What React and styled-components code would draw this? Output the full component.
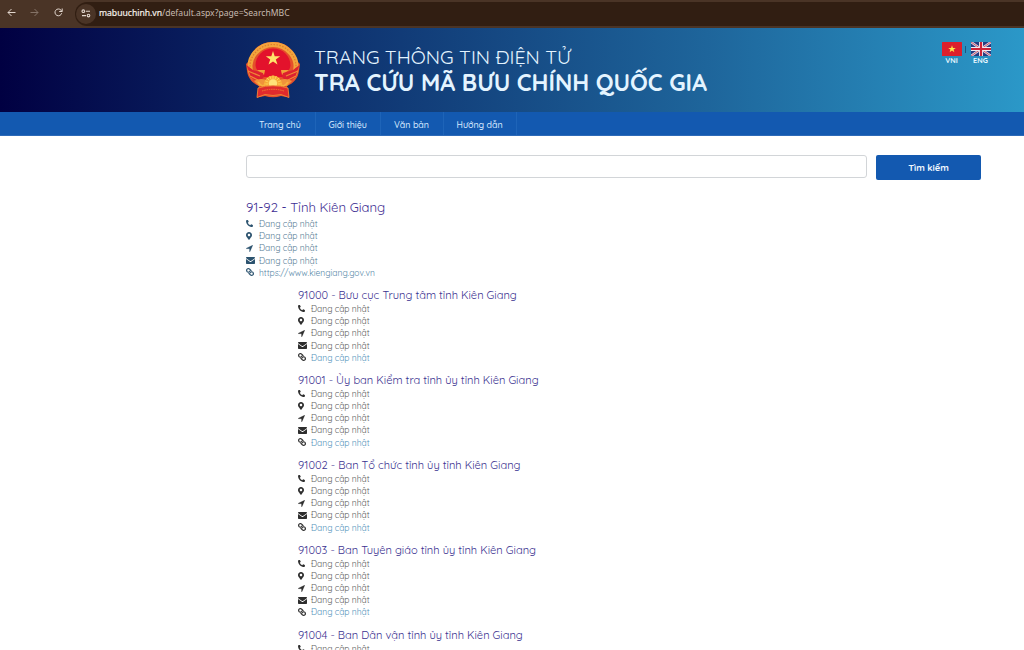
import React from 'react';
import styled, { createGlobalStyle } from 'styled-components';
import { FaPhoneAlt, FaMapMarkerAlt, FaLink } from 'react-icons/fa';

const GlobalStyle = createGlobalStyle`
  * { box-sizing: border-box; }
  html, body { margin: 0; height: 650px; overflow: hidden; background: #fff; }
  body { font-family: Quicksand, Inter, "Noto Sans", sans-serif; font-feature-settings: "cv11"; }
`;

const Page = styled.div`
  width: 1024px;
  height: 650px;
  overflow: hidden;
`;

const BrowserBar = styled.div`
  display: flex;
  align-items: center;
  height: 28px;
  padding: 0 0 3px 5px;
  background: #4a3426;
  color: #dccfc6;
`;

const ToolButton = styled.span`
  display: flex;
  justify-content: center;
  width: ${(p) => p.$w}px;
  color: ${(p) => (p.$dim ? '#857367' : '#e2d6cd')};
`;

const AddressBar = styled.div`
  display: flex;
  align-items: center;
  flex: 1;
  height: 24px;
  margin: 2px 0 0 10px;
  padding-left: 1px;
  border-radius: 12px 0 0 12px;
  background: #311e12;
`;

const SiteButton = styled.span`
  display: flex;
  align-items: center;
  justify-content: center;
  width: 20px;
  height: 20px;
  margin-right: 3px;
  border-radius: 50%;
  background: #4a3426;
`;

const Url = styled.span`
  font: 8.6px "Noto Sans", sans-serif;
  margin-top: -2px;
  white-space: pre;
  color: #c8bbb1;
  b { font-weight: 400; color: #f6efe9; -webkit-text-stroke: 0.2px #f6efe9; }
`;

const Header = styled.header`
  display: flex;
  align-items: flex-start;
  height: 84px;
  padding-left: 245px;
  background: linear-gradient(90deg, #010042 0%, #0d2e6c 30%, #1e659b 69%, #2b98c8 100%);
`;

const EmblemBox = styled.div`
  width: 56px;
  height: 60px;
  margin: 12px 13px 0 0;
`;

const Titles = styled.div`
  flex: 1;
  padding-top: 16px;
  color: #e4f4ff;
  white-space: nowrap;
`;

const TitleTop = styled.div`
  font-size: 19.6px;
  line-height: 26px;
  font-weight: 400;
`;

const TitleMain = styled.div`
  font-size: 23.5px;
  line-height: 24px;
  font-weight: 700;
`;

const Languages = styled.div`
  display: flex;
  padding: 14px 33px 0 0;
`;

const Language = styled.div`
  display: flex;
  flex-direction: column;
  align-items: center;
  width: 21px;
  color: #e9f8ff;
  font-size: 7.4px;
  font-weight: 700;
  line-height: 9px;
  svg { display: block; }
`;

const LanguageDivider = styled.i`
  width: 1px;
  height: 7px;
  margin: 4px 4px 0 3px;
  background: #1c5680;
`;

const Nav = styled.nav`
  display: flex;
  height: 24px;
  padding-left: 246px;
  background: #1359b0;
  border-bottom: 1px solid #2d6ab8;
`;

const NavItem = styled.a`
  width: ${(p) => p.$w}px;
  padding-left: 13px;
  border-right: 1px solid #1e64b8;
  color: #d9eaff;
  font-size: 8.9px;
  font-weight: 500;
  line-height: 25px;
  white-space: nowrap;
`;

const SearchRow = styled.form`
  display: flex;
  align-items: flex-start;
  gap: 9px;
  padding: 19px 0 0 246px;
`;

const SearchInput = styled.input`
  width: 621px;
  height: 23px;
  border: 1px solid #d2d5d8;
  border-radius: 3px;
  background: #fff;
  outline: none;
`;

const SearchButton = styled.button`
  width: 105px;
  height: 25px;
  padding: 0;
  border: 0;
  border-radius: 2px;
  background: #1359b0;
  color: #f3f9ff;
  font: 700 9.3px Quicksand, Inter, sans-serif;
`;

const Results = styled.main`
  padding: 16px 0 0 246px;
`;

const ProvinceTitle = styled.h2`
  margin: 0;
  color: #3f2f94;
  font-size: 13.1px;
  font-weight: 400;
  line-height: 22px;
`;

const Offices = styled.section`
  padding: 8px 0 0 52px;
`;

const Office = styled.article`
  height: 84.9px;
`;

const OfficeTitle = styled.h3`
  margin: 0;
  color: #3b3290;
  font-size: 11.12px;
  font-weight: 400;
  line-height: 16px;
  white-space: nowrap;
`;

const Contact = styled.div`
  display: flex;
  align-items: center;
  height: 12.2px;
  color: ${(p) => p.$color};
  font-size: 8.5px;
  font-weight: 400;
  line-height: 12px;
  white-space: nowrap;
`;

const IconSlot = styled.span`
  display: flex;
  width: 13px;
  margin-left: ${(p) => p.$shift || 0}px;
  margin-right: ${(p) => -(p.$shift || 0)}px;
  padding-bottom: ${(p) => p.$lift || 0}px;
  color: ${(p) => p.$color};
`;

const Mirrored = styled(FaLink)`
  transform: scaleX(-1);
`;

function Emblem() {
  const rays = Array.from({ length: 9 }, (_, i) => Math.PI + (i * Math.PI) / 8);
  return (
    <svg width="56" height="60" viewBox="0 0 56 60">
      <path d="M28 2C15 2 6 10 4 21L1 24L2 31C3 38 7 43 14 46L12 57.500L20 56Q28 58.500 36 56L44 57.500L42 46C49 43 53 38 54 31L55 24L52 21C50 10 41 2 28 2Z" fill="#e5502b" />
      <path d="M9 38C3 30 4 20 10 13S23 4.500 28 4.500S40 6 46 13S53 30 47 38" fill="none" stroke="#f3a43c" strokeWidth="5" />
      <path d="M9 38C3 30 4 20 10 13S23 4.500 28 4.500S40 6 46 13S53 30 47 38" fill="none" stroke="#dd7a2c" strokeWidth="1.200" strokeDasharray="1.500 1.500" />
      <path d="M28 8.500C18 8.500 10.500 16 10.500 25.500Q11 30 15 32L20 31L17 37L39 37L36 31L41 32Q45 30 45.500 25.500C45.500 16 38 8.500 28 8.500Z" fill="#e3122c" />
      <path d="M12 30L20 30L19 35ZM44 30L36 30L37 35Z" fill="#f0a03a" />
      <path d="M1.500 25L8 30L18 33L19 37L14 42L6 38ZM54.500 25L48 30L38 33L37 37L42 42L50 38Z" fill="#dd2130" />
      <path d="M3 31L15 36M5 36L13 40M53 31L41 36M51 36L43 40" stroke="#ef8a35" strokeWidth="1.200" />
      <path d="M9 41Q14 38 20 39.500V46H14ZM47 41Q42 38 36 39.500V46H42Z" fill="#f0933a" />
      <path d="M28 11L29.700 16.200H35.200L30.800 19.400L32.500 24.600L28 21.400L23.500 24.600L25.200 19.400L20.800 16.200H26.300Z" fill="#ffe46a" />
      <path d="M18.500 46A9.500 10.500 0 0 1 37.500 46Z" fill="#f6a936" />
      {rays.map((a) => (
        <path key={a} d={`M${28 + 5 * Math.cos(a)} ${44 + 5 * Math.sin(a)}L${28 + 8.5 * Math.cos(a)} ${44 + 8.5 * Math.sin(a)}`} stroke="#ffd257" strokeWidth="1" />
      ))}
      <circle cx="28" cy="43.500" r="4.200" fill="#ffe279" />
      <path d="M13 42Q18 49 20.500 43.500M43 42Q38 49 35.500 43.500" fill="none" stroke="#f7b13e" strokeWidth="1.800" />
      <path d="M13 48Q28 43.500 43 48L44 57.500L36 54.500Q28 56.500 20 54.500L12 57.500Z" fill="#df2a2d" stroke="#ed8437" strokeWidth="0.900" />
      <path d="M17 51Q28 47.500 39 51" fill="none" stroke="#ee7a35" strokeWidth="1" strokeDasharray="1.500 0.800" />
    </svg>
  );
}

function VietnamFlag() {
  return (
    <svg width="20" height="14" viewBox="0 0 20 14">
      <rect width="20" height="14" rx="0.500" fill="#dc1f2c" />
      <path d="M10 3.200L10.900 5.900H13.800L11.500 7.600L12.400 10.300L10 8.600L7.600 10.300L8.500 7.600L6.200 5.900H9.100Z" fill="#ffe94a" />
    </svg>
  );
}

function BritishFlag() {
  return (
    <svg width="20" height="14" viewBox="0 0 20 14">
      <rect width="20" height="14" fill="#293b80" />
      <path d="M0 0L20 14M20 0L0 14" stroke="#dcd9e8" strokeWidth="2.400" />
      <path d="M0 0L20 14M20 0L0 14" stroke="#cc3347" strokeWidth="0.800" />
      <path d="M10 0V14M0 7H20" stroke="#f1edf4" strokeWidth="4" />
      <path d="M10 0V14M0 7H20" stroke="#ce2237" strokeWidth="2.200" />
    </svg>
  );
}

function ArrowIcon() {
  return (
    <svg width="7" height="7" viewBox="0 0 7 7">
      <path d="M6.900 0.100L4 6.700H3.500V3.700H0.300V3.200Z" fill="currentColor" stroke="currentColor" strokeWidth="0.200" />
    </svg>
  );
}

function EnvelopeIcon() {
  return (
    <svg width="9" height="7" viewBox="0 0 9 7">
      <path d="M0.700 0H8.300Q9 0 9 0.700Q8.900 1.300 8.200 1.800L4.900 4Q4.500 4.200 4.100 4L0.800 1.800Q0.100 1.300 0 0.700Q0 0 0.700 0ZM0 2.100L3.800 4.700Q4.500 5.100 5.200 4.700L9 2.100V6.300Q9 7 8.300 7H0.700Q0 7 0 6.300Z" fill="currentColor" />
    </svg>
  );
}

const PENDING = 'Đang cập nhật';

function ContactList({ icon, text, linkColor, link = PENDING }) {
  return (
    <>
      <Contact $color={text}><IconSlot $color={icon} $lift={1}><FaPhoneAlt size={7} /></IconSlot>{PENDING}</Contact>
      <Contact $color={text}><IconSlot $color={icon} $shift={-1.3}><FaMapMarkerAlt size={8} /></IconSlot>{PENDING}</Contact>
      <Contact $color={text}><IconSlot $color={icon}><ArrowIcon /></IconSlot>{PENDING}</Contact>
      <Contact $color={text}><IconSlot $color={icon}><EnvelopeIcon /></IconSlot>{PENDING}</Contact>
      <Contact $color={linkColor}><IconSlot $color={icon} $lift={1}><Mirrored size={8} /></IconSlot>{link}</Contact>
    </>
  );
}

const offices = [
  '91000 - Bưu cục Trung tâm tỉnh Kiên Giang',
  '91001 - Ủy ban Kiểm tra tỉnh ủy tỉnh Kiên Giang',
  '91002 - Ban Tổ chức tỉnh ủy tỉnh Kiên Giang',
  '91003 - Ban Tuyên giáo tỉnh ủy tỉnh Kiên Giang',
  '91004 - Ban Dân vận tỉnh ủy tỉnh Kiên Giang',
];

const stroke = { fill: 'none', stroke: 'currentColor', strokeWidth: 1 };

export default function App() {
  return (
    <Page>
      <GlobalStyle />
      <BrowserBar>
        <ToolButton $w={12}><svg width="9" height="9" viewBox="0 0 9 9" {...stroke}><path d="M8.500 4.500H1M4.500 1L1 4.500L4.500 8" /></svg></ToolButton>
        <ToolButton $w={34} $dim><svg width="9" height="9" viewBox="0 0 9 9" {...stroke}><path d="M0.500 4.500H8M4.500 1L8 4.500L4.500 8" /></svg></ToolButton>
        <ToolButton $w={14}><svg width="9" height="9" viewBox="0 0 9 9" {...stroke}><path d="M7.700 5.200A3.400 3.400 0 1 1 7 2.200L8 3.300M8.200 0.500V3.500H5.200" /></svg></ToolButton>
        <AddressBar>
          <SiteButton>
            <svg width="10" height="9" viewBox="0 0 10 9" fill="none" stroke="#e2d6cd" strokeWidth="1.100">
              <circle cx="2.300" cy="2.200" r="1.300" /><path d="M4.800 2.200H9M1 6.600H5" /><circle cx="7.500" cy="6.600" r="1.300" />
            </svg>
          </SiteButton>
          <Url><b>mabuuchinh.vn</b>/default.aspx?page=SearchMBC</Url>
        </AddressBar>
      </BrowserBar>
      <Header>
        <EmblemBox><Emblem /></EmblemBox>
        <Titles>
          <TitleTop>TRANG THÔNG TIN ĐIỆN TỬ</TitleTop>
          <TitleMain>TRA CỨU MÃ BƯU CHÍNH QUỐC GIA</TitleMain>
        </Titles>
        <Languages>
          <Language><VietnamFlag />VNI</Language>
          <LanguageDivider />
          <Language><BritishFlag />ENG</Language>
        </Languages>
      </Header>
      <Nav>
        <NavItem $w={69.5}>Trang chủ</NavItem>
        <NavItem $w={65.5}>Giới thiệu</NavItem>
        <NavItem $w={62.5}>Văn bản</NavItem>
        <NavItem $w={73.5}>Hướng dẫn</NavItem>
      </Nav>
      <SearchRow onSubmit={(e) => e.preventDefault()}>
        <SearchInput />
        <SearchButton>Tìm kiếm</SearchButton>
      </SearchRow>
      <Results>
        <ProvinceTitle>91-92 - Tỉnh Kiên Giang</ProvinceTitle>
        <ContactList icon="#2c536f" text="#557b94" linkColor="#5486a6" link="https://www.kiengiang.gov.vn" />
        <Offices>
          {offices.map((name) => (
            <Office key={name}>
              <OfficeTitle>{name}</OfficeTitle>
              <ContactList icon="#2e2e2e" text="#5c5c5c" linkColor="#5192ba" />
            </Office>
          ))}
        </Offices>
      </Results>
    </Page>
  );
}
